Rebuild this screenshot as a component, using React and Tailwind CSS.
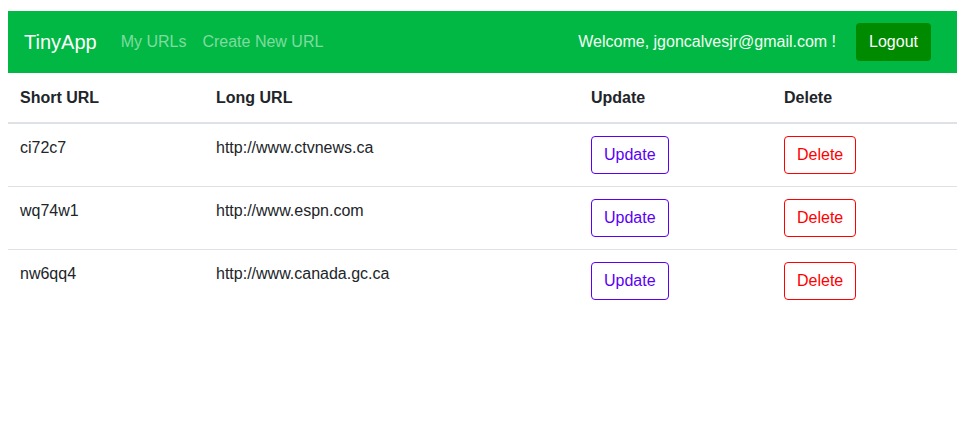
import React from 'react'

const urls = [
	{ short: 'ci72c7', long: 'http://www.ctvnews.ca' },
	{ short: 'wq74w1', long: 'http://www.espn.com' },
	{ short: 'nw6qq4', long: 'http://www.canada.gc.ca' }
]

const cols = 'grid grid-cols-[196px_375px_193px_1fr]'

export default function App() {
	return (
		<div className="min-h-screen bg-white pl-2 pr-[9px] pt-[11px] text-base text-[#212529] font-['Liberation_Sans',Arial,sans-serif]">
			<nav className="flex h-[62px] items-center bg-[#00b843] pl-4 pr-[26px]">
				<span className="mr-4 text-xl leading-[30px] text-white">TinyApp</span>
				<a className="px-2 text-[rgba(255,255,255,0.5)]">My URLs</a>
				<a className="px-2 text-[rgba(255,255,255,0.5)]">Create New URL</a>
				<div className="ml-auto flex items-center gap-5">
					<span className="text-[#f4fff4]">Welcome, jgoncalvesjr@gmail.com !</span>
					<button className="h-[38px] rounded bg-[#008a00] px-[13px] leading-6 text-white">Logout</button>
				</div>
			</nav>
			<div className={cols + ' border-b-2 border-[#dee2e6] font-bold'}>
				<div className="px-3 pt-[13px] pb-3 leading-6">Short URL</div>
				<div className="px-3 pt-[13px] pb-3 leading-6">Long URL</div>
				<div className="px-3 pt-[13px] pb-3 leading-6">Update</div>
				<div className="px-3 pt-[13px] pb-3 leading-6">Delete</div>
			</div>
			{urls.map((u, i) => (
				<div key={u.short} className={cols + (i > 0 ? ' border-t border-[#dee2e6]' : '')}>
					<div className="p-3 leading-6">{u.short}</div>
					<div className="p-3 leading-6">{u.long}</div>
					<div className="p-3">
						<button className="h-[38px] rounded border border-[#5b00f5] px-3 leading-6 text-[#5b00f5]">Update</button>
					</div>
					<div className="p-3">
						<button className="h-[38px] rounded border border-[#ff0000] px-3 leading-6 text-[#ff0000]">Delete</button>
					</div>
				</div>
			))}
		</div>
	)
}
